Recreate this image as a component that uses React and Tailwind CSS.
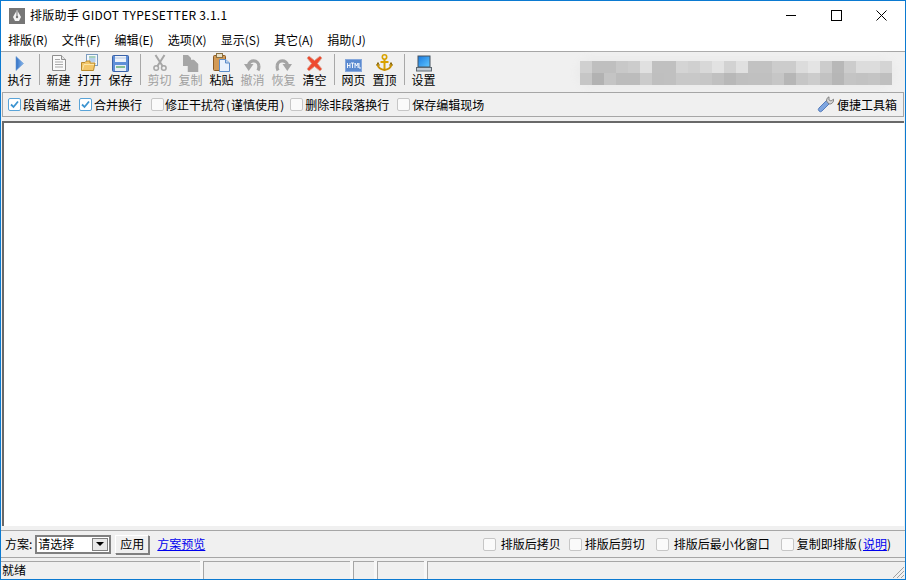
import React from 'react';

const uiFont = { fontFamily: '"Noto Sans CJK SC", "Liberation Sans", sans-serif' };

// ---- toolbar icons ----
const RunIcon = () => (
  <svg width="16" height="17" viewBox="0 0 16 17">
    <defs>
      <linearGradient id="runFill" x1="0" y1="0" x2="1" y2="0">
        <stop offset="0" stopColor="#2f6fc4" />
        <stop offset="1" stopColor="#8ab8ec" />
      </linearGradient>
    </defs>
    <path d="M4 1.5 L11.5 8.5 L4 15.5 Z" fill="url(#runFill)" stroke="#6a9ad4" strokeWidth="0.6" />
  </svg>
);

const NewIcon = () => (
  <svg width="16" height="18" viewBox="0 0 16 18">
    <path d="M1.5 1.5 H10.5 L14.5 5.5 V16.5 H1.5 Z" fill="#fafafa" stroke="#8e8e8e" />
    <path d="M10.5 1.5 V5.5 H14.5" fill="#e4e4e4" stroke="#8e8e8e" />
    <path d="M4 5.5 H9 M4 8 H12 M4 10.5 H12 M4 13 H12" stroke="#a8a8a8" />
  </svg>
);

const OpenIcon = () => (
  <svg width="17" height="18" viewBox="0 0 17 18">
    <rect x="5.5" y="0.5" width="11" height="11" fill="#f4f8fc" stroke="#7c9cc0" />
    <path d="M8 3 H14.5" stroke="#58a878" />
    <path d="M8 5 H14.5 M8 7 H14.5" stroke="#7aa6d6" />
    <path d="M0.5 8.5 H4 L5.5 7 H9 V9 H14 L12.5 16.5 H0.5 Z" fill="#f3c668" stroke="#b98a2c" />
    <path d="M1.5 15.5 L3 10.5 H13" fill="none" stroke="#fbe6a8" />
  </svg>
);

const SaveIcon = () => (
  <svg width="17" height="17" viewBox="0 0 17 17">
    <rect x="0.5" y="0.5" width="16" height="16" rx="1" fill="#5f8fd8" stroke="#3a62a8" />
    <rect x="3" y="1" width="11" height="6" fill="#eef3fa" />
    <path d="M3 3 H14" stroke="#b8c8e0" />
    <rect x="3" y="10" width="11" height="6" fill="#e8eef6" />
    <path d="M4 12 H13" stroke="#5aa868" strokeWidth="1.4" />
  </svg>
);

const CutIcon = () => (
  <svg width="14" height="18" viewBox="0 0 14 18" fill="none" stroke="#a6a6a6">
    <path d="M2.5 1 L9.5 12 M11.5 1 L4.5 12" strokeWidth="2" />
    <circle cx="3.2" cy="14" r="2.3" strokeWidth="1.5" />
    <circle cx="10.8" cy="14" r="2.3" strokeWidth="1.5" />
  </svg>
);

const CopyIcon = () => (
  <svg width="17" height="17" viewBox="0 0 17 17" fill="#a6a6a6">
    <path d="M1 0 H6 L9 3 V11 H1 Z" />
    <path d="M6 5 H12 L16 9 V17 H6 Z" stroke="#a6a6a6" strokeWidth="0.5" />
  </svg>
);

const PasteIcon = () => (
  <svg width="17" height="19" viewBox="0 0 17 19">
    <rect x="0.5" y="2.5" width="12" height="15" rx="1" fill="#d39a56" stroke="#8a5a24" />
    <rect x="3.5" y="0.5" width="6" height="4" fill="#e8e0c8" stroke="#8a7040" />
    <path d="M6.5 6.5 H12.5 L16.5 10 V18.5 H6.5 Z" fill="#eaf2fc" stroke="#5c8cc8" />
    <path d="M12.5 6.5 V10 H16.5" fill="#bcd4f0" stroke="#5c8cc8" />
  </svg>
);

// curved arrow, mirrored for redo
const UndoIcon = ({ flip }) => (
  <svg width="17" height="14" viewBox="0 0 17 14" className={flip ? '-scale-x-100' : ''}>
    <path d="M4.5 7 A5.2 5 0 0 1 14.8 7.5 Q15.2 10 14 12.5" fill="none" stroke="#a4a4a4" strokeWidth="3.2" />
    <path d="M0 6 H9.5 L4.7 13 Z" fill="#a4a4a4" />
  </svg>
);

const ClearIcon = () => (
  <svg width="17" height="17" viewBox="0 0 17 17">
    <path d="M3 1 L8.5 5.5 L14 1 L16 3 L11.5 8.5 L16 14 L14 16 L8.5 11.5 L3 16 L1 14 L5.5 8.5 L1 3 Z" fill="#ee4a30" stroke="#d8a898" strokeWidth="0.8" />
  </svg>
);

const HtmlIcon = () => (
  <svg width="17" height="13" viewBox="0 0 17 13">
    <rect x="0.5" y="0.5" width="16" height="12" fill="#5b8ad0" stroke="#86a8dc" />
    <path d="M2.5 4 V9 M5 4 V9 M2.5 6.5 H5 M6 4 H9 M7.5 4 V9 M10 9 V4 L11.5 7 L13 4 V9 M14 4 V9 H16" stroke="#fff" fill="none" strokeWidth="0.9" />
  </svg>
);

const AnchorIcon = () => (
  <svg width="17" height="18" viewBox="0 0 17 18" fill="none" stroke="#d9a200">
    <circle cx="8.5" cy="3" r="2.2" strokeWidth="1.6" />
    <path d="M8.5 5 V16 M4.5 8 H12.5" strokeWidth="2" />
    <path d="M1.5 10 C2 14 5 15.5 8.5 16 C12 15.5 15 14 15.5 10" strokeWidth="2" stroke="#c89000" />
    <path d="M0.5 11.5 L2 8.5 L3.5 11.5 M13.5 11.5 L15 8.5 L16.5 11.5" stroke="#8a6a10" />
  </svg>
);

const MonitorIcon = () => (
  <svg width="16" height="17" viewBox="0 0 16 17">
    <defs>
      <linearGradient id="screenFill" x1="0" y1="0" x2="1" y2="1">
        <stop offset="0" stopColor="#1c7ce0" />
        <stop offset="1" stopColor="#5cc4ff" />
      </linearGradient>
    </defs>
    <rect x="1.5" y="0.5" width="13" height="12" fill="#46525e" />
    <rect x="2.5" y="1.5" width="11" height="10" fill="url(#screenFill)" />
    <rect x="0.5" y="12.5" width="15" height="3.5" fill="#c4ccd4" stroke="#5e6870" />
  </svg>
);

const WrenchIcon = () => (
  <svg width="17" height="17" viewBox="0 0 17 17">
    <path d="M2 12 L10 4 L13 7 L5 15 A2 2 0 0 1 2 12 Z" fill="#7fa6e0" stroke="#3f6ab0" strokeWidth="0.8" />
    <path d="M9.5 5 A4 4 0 0 1 12 0.8 L12 4 L14 5 L16.5 3.2 A4 4 0 0 1 12 8 Z" fill="#d8d8d8" stroke="#707070" strokeWidth="0.8" />
  </svg>
);

const CheckBox = ({ checked }) => (
  <span
    className={`flex h-[13px] w-[13px] shrink-0 items-center justify-center rounded-[2px] border ${
      checked ? 'border-[#5aa4d8] bg-white' : 'border-[#c6c6c6] bg-[#fafafa]'
    }`}
  >
    {checked && (
      <svg width="11" height="11" viewBox="0 0 11 11" fill="none">
        <path d="M2 5.5 L4.5 8 L9 2.5" stroke="#3c94d0" strokeWidth="1.8" />
      </svg>
    )}
  </span>
);

const Option = ({ label, checked, className = '' }) => (
  <div className={`flex items-center gap-[2px] whitespace-nowrap ${className}`}>
    <CheckBox checked={checked} />
    <span>{label}</span>
  </div>
);

const ToolButton = ({ icon, label, disabled }) => (
  <div className="flex w-[31px] shrink-0 flex-col items-center">
    <div className="flex h-[18px] items-end justify-center">{icon}</div>
    <span className={`leading-[15px] whitespace-nowrap ${disabled ? 'text-[#a0a0a0]' : 'text-black'}`}>{label}</span>
  </div>
);

const ToolSep = () => (
  <div className="flex w-[8px] shrink-0 justify-center">
    <div className="h-[31px] w-[1px] bg-[#a8a8a8]" />
  </div>
);

const menus = ['排版(R)', '文件(F)', '编辑(E)', '选项(X)', '显示(S)', '其它(A)', '捐助(J)'];

// pixelated account name, two rows of 12px cells
const mosaicTop = ['#d0d0d0', '#bfbfbf', '#bfbfbf', '#c8c8c8', '#cccccc', '#e0e0e0', '#c0c0c0', '#c0c0c0', '#d4d4d4', '#d0d0d0', '#d8d8d8', '#e2e2e2', '#d2d2d2', '#e0e0e0', '#c2c2c2', '#c2c2c2', '#cccccc', '#cccccc', '#dcdcdc', '#e4e4e4', '#cccccc', '#b8b8b8', '#cccccc', '#dcdcdc', '#dcdcdc', '#d4d4d4'];
const mosaicBottom = ['#c6c6c6', '#b2b2b2', '#c4c4c4', '#bcbcbc', '#bcbcbc', '#cbcbcb', '#bfbfbf', '#c0c0c0', '#c8c8c8', '#c8c8c8', '#c6c6c6', '#c0c0c0', '#b8b8b8', '#bfbfbf', '#c0c0c0', '#c0c0c0', '#c6c6c6', '#b6b6b6', '#c6c6c6', '#cccccc', '#c2c2c2', '#b6b6b6', '#c4c4c4', '#c2c2c2', '#c4c4c4', '#bfbfbf'];

const MosaicRow = ({ colors }) => (
  <div className="flex h-[12px]">
    {colors.map((c, i) => (
      <div key={i} className="h-full w-[12px]" style={{ backgroundColor: c }} />
    ))}
  </div>
);

export default function App() {
  return (
    <div
      className="flex h-[580px] w-[906px] flex-col overflow-hidden border border-[#0b7ad1] bg-[#f0f0f0] text-[12px] text-black"
      style={uiFont}
    >
      {/* title bar */}
      <div className="flex h-[29px] shrink-0 items-center bg-white pl-[8px]">
        <svg width="16" height="16" viewBox="0 0 16 16">
          <rect width="16" height="16" fill="#767676" />
          <path d="M8 2 L12 9 L10 13 H6 L4 9 Z" fill="#f4f4f4" />
          <path d="M8 3 V8" stroke="#767676" />
          <circle cx="8" cy="9" r="1.2" fill="#767676" />
        </svg>
        <span className="mb-[2px] ml-[5px] tracking-[0.28px]">排版助手 GIDOT TYPESETTER 3.1.1</span>
        <div className="ml-auto flex h-full items-center">
          <div className="flex w-[46px] justify-center">
            <div className="h-[1px] w-[10px] bg-black" />
          </div>
          <div className="flex w-[45px] justify-center">
            <div className="h-[11px] w-[11px] border border-black" />
          </div>
          <div className="flex w-[45px] justify-center pr-[1px]">
            <svg width="11" height="11" viewBox="0 0 11 11" stroke="#000" fill="none">
              <path d="M0.5 0.5 L10.5 10.5 M10.5 0.5 L0.5 10.5" />
            </svg>
          </div>
          <div className="w-[1px]" />
        </div>
      </div>

      {/* menu bar */}
      <div className="flex h-[21px] shrink-0 items-center gap-[14px] bg-white pb-[2px] pl-[7px]">
        {menus.map((m) => (
          <span key={m} className="whitespace-nowrap">{m}</span>
        ))}
      </div>

      {/* toolbar */}
      <div className="flex h-[41px] shrink-0 items-start border-t border-[#a6a6a6] pl-[3px] pt-[2px]">
        <ToolButton icon={<RunIcon />} label="执行" />
        <ToolSep />
        <ToolButton icon={<NewIcon />} label="新建" />
        <ToolButton icon={<OpenIcon />} label="打开" />
        <ToolButton icon={<SaveIcon />} label="保存" />
        <ToolSep />
        <ToolButton icon={<CutIcon />} label="剪切" disabled />
        <ToolButton icon={<CopyIcon />} label="复制" disabled />
        <ToolButton icon={<PasteIcon />} label="粘贴" />
        <ToolButton icon={<UndoIcon />} label="撤消" disabled />
        <ToolButton icon={<UndoIcon flip />} label="恢复" disabled />
        <ToolButton icon={<ClearIcon />} label="清空" />
        <ToolSep />
        <ToolButton icon={<HtmlIcon />} label="网页" />
        <ToolButton icon={<AnchorIcon />} label="置顶" />
        <ToolSep />
        <ToolButton icon={<MonitorIcon />} label="设置" />
        <div className="ml-[140px] shrink-0 self-center rounded-[14px] bg-[#ececec] p-[1px] shadow-[0_0_6px_4px_#ececec]">
          <MosaicRow colors={mosaicTop} />
          <MosaicRow colors={mosaicBottom} />
        </div>
      </div>

      {/* option strip */}
      <div className="mx-[1px] flex h-[25px] shrink-0 items-center border border-[#a6a6a6] pl-[5px] pr-[6px]">
        <Option label="段首缩进" checked />
        <Option label="合并换行" checked className="ml-[8px]" />
        <div className="ml-[9px] flex items-center gap-[1px] whitespace-nowrap">
          <CheckBox />
          <span>
            修正干扰符<span className="mx-[1px]">(</span>谨慎使用<span className="mx-[1px]">)</span>
          </span>
        </div>
        <Option label="删除非段落换行" className="ml-[5px] gap-[1px]" />
        <Option label="保存编辑现场" className="ml-[8px]" />
        <div className="ml-auto flex items-center gap-[3px]">
          <WrenchIcon />
          <span>便捷工具箱</span>
        </div>
      </div>

      {/* text area */}
      <div className="mx-[1px] mt-[4px] flex-1 border-t-2 border-l-2 border-t-[#696969] border-l-[#696969] bg-white" />

      {/* preset row */}
      <div className="mt-[4px] flex h-[28px] shrink-0 items-center border-y border-[#a6a6a6] pl-[4px] pr-[14px]">
        <span className="whitespace-nowrap">方案:</span>
        <div className="ml-[3px] flex h-[19px] w-[76px] items-center justify-between border-2 border-[#808080] bg-white pl-[1px] pr-[1px]">
          <span className="leading-none">请选择</span>
          <div className="flex h-[13px] w-[16px] items-center justify-center border border-[#808080] bg-[#e8e8e8]">
            <div className="h-0 w-0 border-x-[4px] border-t-[4px] border-x-transparent border-t-black" />
          </div>
        </div>
        <div className="ml-[4px] flex h-[19px] w-[34px] items-center justify-center border border-[#808080] border-t-white border-l-white bg-[#f0f0f0] shadow-[1px_1px_0_#808080]">
          应用
        </div>
        <span className="ml-[8px] text-[#0000ee] underline">方案预览</span>
        <Option label="排版后拷贝" className="ml-auto gap-[5px]" />
        <Option label="排版后剪切" className="ml-[8px] gap-[3px]" />
        <Option label="排版后最小化窗口" className="ml-[11px] gap-[5px]" />
        <div className="ml-[11px] flex items-center gap-[3px]">
          <CheckBox />
          <span className="whitespace-nowrap">
            复制即排版<span className="mx-[1px]">(</span><span className="text-[#0000ee] underline">说明</span>)
          </span>
        </div>
      </div>

      {/* status bar: sunken panes with light gaps between them */}
      <div className="mt-[3px] flex h-[18px] shrink-0 items-stretch gap-[3px] bg-[#f8f8f8]">
        <div className="w-[199px] border-t border-[#a6a6a6] bg-[#f0f0f0] pl-[1px] leading-[16px]">就绪</div>
        <div className="w-[147px] border-t border-l border-[#a6a6a6] bg-[#f0f0f0]" />
        <div className="w-[21px] border-t border-l border-[#a6a6a6] bg-[#f0f0f0]" />
        <div className="w-[47px] border-t border-l border-[#a6a6a6] bg-[#f0f0f0]" />
        <div className="flex flex-1 justify-end border-t border-l border-[#a6a6a6] bg-[#f0f0f0]">
          <svg width="14" height="14" viewBox="0 0 14 14" stroke="#a0a0a0" className="self-end">
            <path d="M2 13 L13 2 M6 13 L13 6 M10 13 L13 10" />
          </svg>
        </div>
      </div>
    </div>
  );
}
